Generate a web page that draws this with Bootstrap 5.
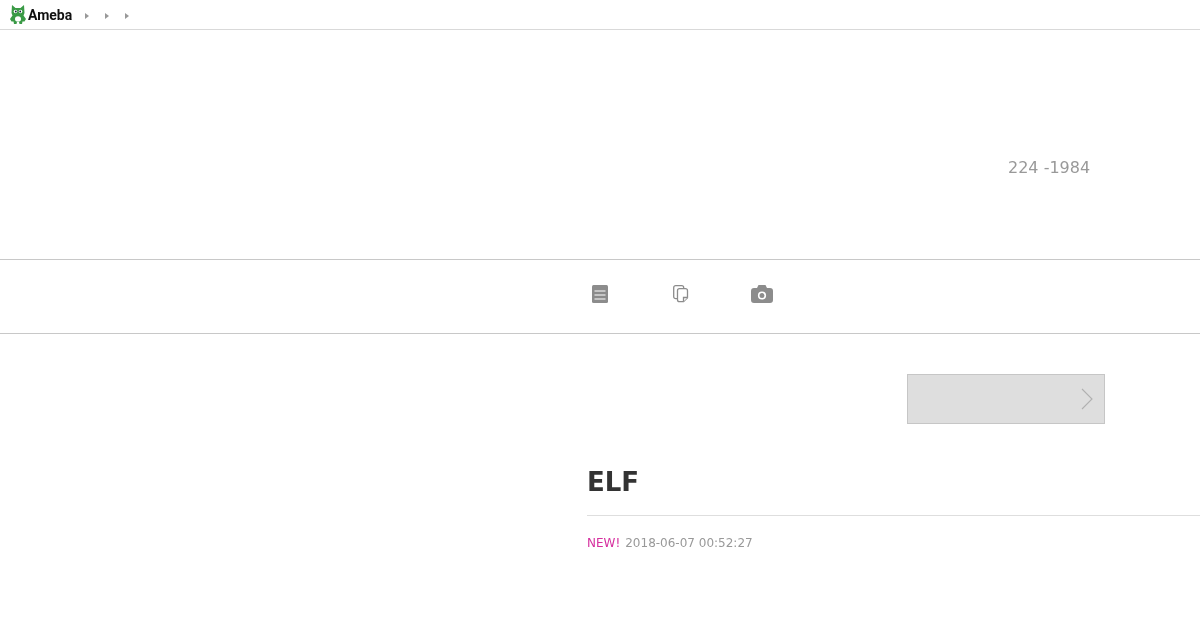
<!DOCTYPE html>
<html lang="ja">
<head>
    <meta charset="UTF-8">
    <meta name="viewport" content="width=device-width, initial-scale=1.0">
    <title>ELF</title>
    <link href="https://cdn.jsdelivr.net/npm/bootstrap@5.3.0/dist/css/bootstrap.min.css" rel="stylesheet">
    <style>
        html, body { height: 630px; overflow: hidden; }
        body { background: #fff; font-family: "DejaVu Sans", sans-serif; color: #333; }
        .top-bar { height: 30px; border-bottom: 1px solid #d9d9d9; padding-left: 10px; }
        .brand { width: 75px; }
        .brand-mark { flex-shrink: 0; margin-bottom: 1px; }
        .logo-text { font-family: Roboto, sans-serif; font-size: 14px; font-weight: 700; color: #111; line-height: 30px; margin-left: 2px; }
        .top-links { gap: 16px; padding-top: 3px; }
        .tri { width: 0; height: 0; border-left: 4px solid #999; border-top: 3px solid transparent; border-bottom: 3px solid transparent; }
        .blog-head { height: 230px; border-bottom: 1px solid #c8c8c8; padding: 126px 110px 0 0; }
        .blog-no { display: inline-block; font-size: 16px; line-height: 20px; color: #999; }
        .icon-nav { height: 74px; border-bottom: 1px solid #c8c8c8; padding: 0 0 5px 559px; }
        .icon-cell { width: 81px; display: flex; justify-content: center; }
        .icon-cell svg { flex-shrink: 0; }
        .main-col { margin-left: 587px; padding-top: 40px; }
        .pager-box { width: 198px; height: 50px; margin-left: 320px; background: #dedede; border: 1px solid #c6c6c6; padding-right: 11px; }
        .entry-title { font-size: 26px; font-weight: 700; line-height: 34px; margin: 41px 0 0; color: #333; }
        .entry-rule { border-top: 1px solid #dedede; margin-top: 16px; }
        .entry-meta { font-size: 12px; line-height: 16px; margin-top: 19px; color: #999; gap: 5px; }
        .new-mark { color: #d6309f; }
        .logo-text, .blog-no, .entry-title, .entry-meta { will-change: transform; }
    </style>
</head>
<body>
    <div class="top-bar d-flex align-items-center">
        <a class="brand d-flex align-items-center text-decoration-none" href="#">
            <svg class="brand-mark" width="16" height="19" viewBox="0 0 16 19">
                <path fill="#3a9a46" d="M2 0l3.500 3h5L14 0l.5 8-1 2.500 2.500 3.500-1.500 2.500H12.500L12 19H9.500l-.5-2H7l-.5 2H4l-.5-2.500H1.500L0 14l2.500-3.500-1-2.500z"/>
                <circle cx="5.500" cy="6.500" r="1.800" fill="#fff"/>
                <circle cx="10.500" cy="6.500" r="1.800" fill="#fff"/>
                <circle cx="5.800" cy="6.500" r=".9" fill="#123"/>
                <circle cx="10.200" cy="6.500" r=".9" fill="#123"/>
                <ellipse cx="8" cy="14" rx="3" ry="2.800" fill="#fff"/>
            </svg>
            <span class="logo-text">Ameba</span>
        </a>
        <div class="top-links d-flex align-items-center">
            <span class="tri"></span>
            <span class="tri"></span>
            <span class="tri"></span>
        </div>
    </div>

    <div class="blog-head text-end">
        <span class="blog-no">224 -1984</span>
    </div>

    <div class="icon-nav d-flex align-items-center">
        <div class="icon-cell">
            <svg width="16" height="18" viewBox="0 0 16 18">
                <rect x="0" y="0" width="16" height="18" rx="1.500" fill="#8c8c8c"/>
                <path d="M2.500 6h11M2.500 10h11M2.500 14h11" stroke="#fff" stroke-width="1.200"/>
            </svg>
        </div>
        <div class="icon-cell">
            <svg width="16" height="18" viewBox="0 0 16 18" fill="#fff" stroke="#8c8c8c" stroke-width="1.300">
                <rect x=".7" y=".7" width="10" height="13" rx="2"/>
                <path d="M6.500 3.700h6a2 2 0 0 1 2 2v7l-4 4h-4a2 2 0 0 1-2-2v-9a2 2 0 0 1 2-2z"/>
                <path d="M14.500 12.500h-4v4"/>
            </svg>
        </div>
        <div class="icon-cell">
            <svg width="22" height="18" viewBox="0 0 22 18">
                <path fill="#8c8c8c" d="M3 3h3l1.500-3h7L16 3h3a3 3 0 0 1 3 3v9a3 3 0 0 1-3 3H3a3 3 0 0 1-3-3V6a3 3 0 0 1 3-3z"/>
                <circle cx="11" cy="10.500" r="3.300" fill="none" stroke="#fff" stroke-width="1.600"/>
            </svg>
        </div>
    </div>

    <div class="main-col">
        <a class="pager-box d-flex align-items-center justify-content-end" href="#">
            <svg width="12" height="22" viewBox="0 0 12 22" fill="none" stroke="#b0b0b0" stroke-width="1.100">
                <path d="M1 1l10 10L1 21"/>
            </svg>
        </a>
        <h1 class="entry-title">ELF</h1>
        <div class="entry-rule"></div>
        <div class="entry-meta d-flex">
            <span class="new-mark">NEW!</span>
            <span>2018-06-07 00:52:27</span>
        </div>
    </div>

    <script src="https://cdn.jsdelivr.net/npm/bootstrap@5.3.0/dist/js/bootstrap.bundle.min.js"></script>
</body>
</html>
